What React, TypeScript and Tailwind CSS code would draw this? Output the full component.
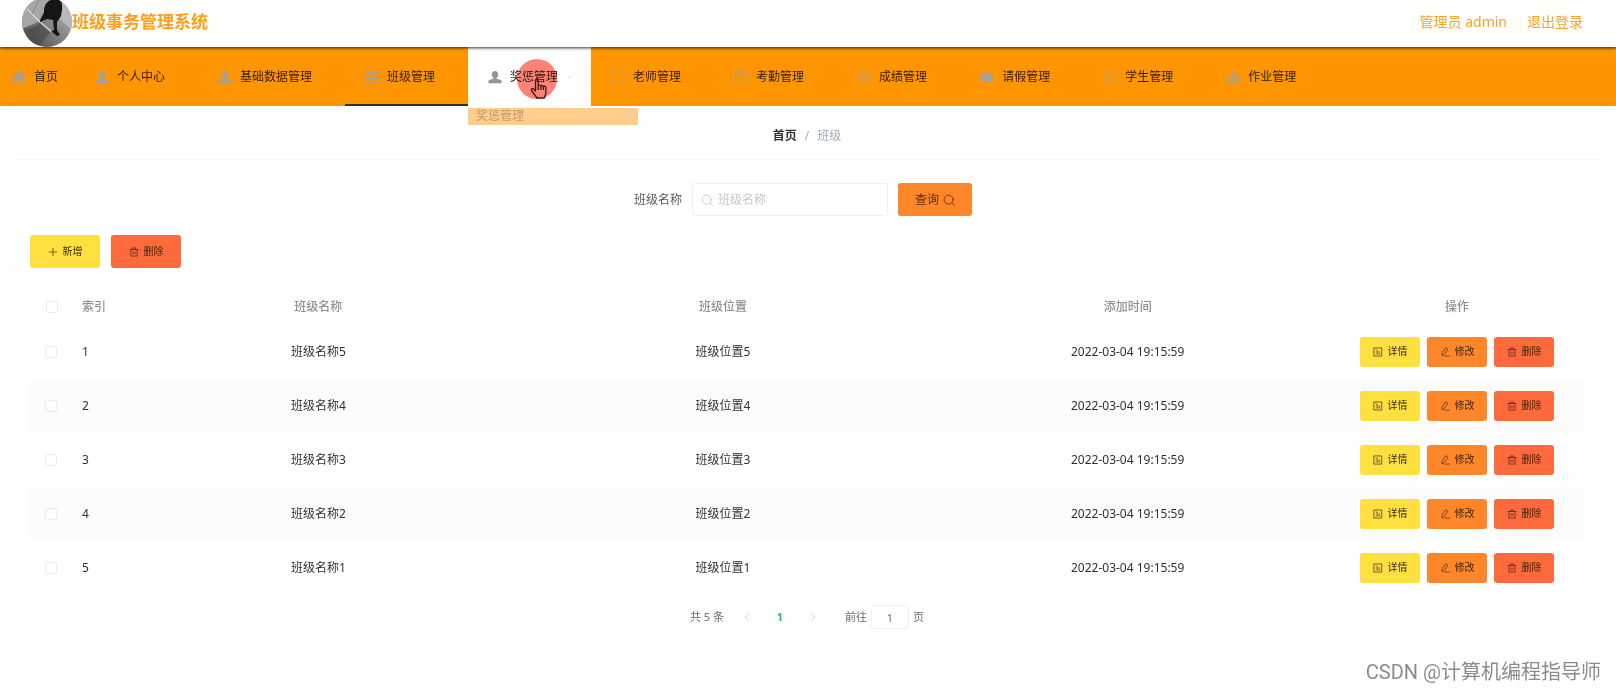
import { useState } from 'react'
import type { ReactNode } from 'react'

type Row = { id: number; name: string; place: string; time: string }
type MenuItem = { label: string; icon: ReactNode }

const rows: Row[] = [
  { id: 1, name: '班级名称5', place: '班级位置5', time: '2022-03-04 19:15:59' },
  { id: 2, name: '班级名称4', place: '班级位置4', time: '2022-03-04 19:15:59' },
  { id: 3, name: '班级名称3', place: '班级位置3', time: '2022-03-04 19:15:59' },
  { id: 4, name: '班级名称2', place: '班级位置2', time: '2022-03-04 19:15:59' },
  { id: 5, name: '班级名称1', place: '班级位置1', time: '2022-03-04 19:15:59' },
]

// 选单图标：实心与线框两种
function Solid({ children }: { children: ReactNode }) {
  return <svg viewBox="0 0 16 16" fill="currentColor" className="size-[14px]" aria-hidden="true">{children}</svg>
}

function Line({ children, className = 'size-[14px]' }: { children: ReactNode; className?: string }) {
  return (
    <svg viewBox="0 0 16 16" fill="none" stroke="currentColor" strokeWidth="1.1" strokeLinecap="round"
      strokeLinejoin="round" className={className} aria-hidden="true">{children}</svg>
  )
}

const userIcon = (
  <Solid><path d="M8 1.200c2.200 0 3.700 1.600 3.700 3.800 0 1.700-.8 3.200-2 4v1l4.600 1.500c.8.3 1.200.9 1.200 1.700V15H.5v-1.800c0-.8.4-1.400 1.200-1.700L6.300 10V9c-1.200-.8-2-2.300-2-4C4.300 2.800 5.800 1.200 8 1.200z" /></Solid>
)

const menus: MenuItem[] = [
  { label: '个人中心', icon: userIcon },
  { label: '基础数据管理', icon: userIcon },
  { label: '班级管理', icon: <Solid><path d="M1 2h14v2H1zM1 5.500h14v1.500H1zM1 9h14v1.500H1zM1 12.500h14v2H1z" /></Solid> },
  { label: '奖惩管理', icon: userIcon },
  { label: '老师管理', icon: <Line><path d="M2 5V2h3M11 2h3v3M14 11v3h-3M5 14H2v-3" /></Line> },
  { label: '考勤管理', icon: <Line><path d="M1.500 14V2.500h13V14h-3M1.500 14h3M6 7l2 2 2.500-3" /></Line> },
  { label: '成绩管理', icon: <Line><circle cx="8" cy="8" r="6.800" /><path d="M5.500 5h5v3.500a2.500 2.500 0 0 1-5 0zM8 11v1.500" /></Line> },
  { label: '请假管理', icon: <Solid><path d="M1 3h14v3.500a1.500 1.500 0 0 0 0 3V13H1V9.500a1.500 1.500 0 0 0 0-3z" /></Solid> },
  { label: '学生管理', icon: <Line><path d="M5 2.300a6.400 6.400 0 1 0 6 0M8 1.500v5" /></Line> },
  { label: '作业管理', icon: <Solid><path d="M1 8h3.500v6.500H1zM6.300 2h3.400v12.500H6.300zM11.500 6H15v8.500h-3.500z" /></Solid> },
]

const active = '班级管理'
const hovered = '奖惩管理'

const searchIcon = <Line className="size-3"><circle cx="7.500" cy="7.500" r="6" /><path d="M12 12l3 3" /></Line>
const trashIcon = <Line className="size-[10px]"><path d="M1.500 4h13M3 4v10.500h10V4M5.500 4V1.500h5V4M6.500 7.500v3.500M9.500 7.500v3.500" /></Line>
const detailIcon = <Line className="size-[10px]"><path d="M2 1.500h12v13H2zM5 5h2M5 8h6M5 11h6" /></Line>
const editIcon = <Line className="size-[10px]"><path d="M9.500 1.500l3 2-6 9-3.500 1.500.5-4zM8 14.500h7" /></Line>

function Logo() {
  return (
    <svg viewBox="0 0 50 50" className="size-[50px] rounded-full" aria-hidden="true">
      <defs>
        <linearGradient id="floor" x1="0" y1="1" x2="1" y2="0">
          <stop offset="0" stopColor="#3c3c3c" />
          <stop offset=".4" stopColor="#777" />
          <stop offset="1" stopColor="#c4c4c4" />
        </linearGradient>
      </defs>
      <rect width="50" height="50" fill="url(#floor)" />
      <path d="M0 0h28L18 24 0 32z" fill="#a6a6a6" />
      <path d="M40 3l10 6v24L38 22z" fill="#b8b8b8" />
      <path d="M5 12l13 13 12 10" stroke="#dcdcdc" strokeWidth="1.200" fill="none" />
      <path d="M17 3l-7 14" stroke="#8a8a8a" />
      <path d="M5 34l13-8 10 10-12 14H8z" fill="#4a4a4a" opacity=".7" />
      <path d="M29 3c4-2 8-1 10 1 2 4 1 10 0 15l-4 6v8l3 5-3 1-6-5 3-1-1-10-6-1-7 3c0-4 3-6 4-10 0-6 2-10 7-12z" fill="#161616" />
    </svg>
  )
}

function Pointer() {
  return (
    <span className="absolute left-[49px] top-3 z-20 block size-10 rounded-full bg-[#fc8378] mix-blend-multiply pointer-events-none">
      <svg viewBox="0 0 18 22" className="absolute left-[13px] top-[19px] w-[18px] h-[22px]" fill="#fc8378" stroke="#4a1518"
        strokeWidth="1.300" strokeLinejoin="round" aria-hidden="true">
        <path d="M5.500 13V2.500c0-2 2.700-2 2.700 0V8c.2-1.300 2.600-1.200 2.700.3.300-1.100 2.400-1 2.500.5.4-1 2.500-.8 2.500 1V15l-1.500 5H7L1.500 12.500c-.8-1.600 1-2.500 2-1.500z" />
        <path d="M8.200 8v4M10.900 8.500V12M13.400 9v3" />
      </svg>
    </span>
  )
}

function Menu({ item }: { item: MenuItem }) {
  const isActive = item.label === active
  const isHovered = item.label === hovered
  return (
    <li className={`relative border-b-2 ${isHovered ? 'bg-white border-white' : isActive ? 'border-[#303133]' : 'border-transparent'}`}>
      <a href="#" className="flex h-[57px] items-center pt-[3px] pl-[18px] pr-[15px] text-[#2d1f0c]">
        <span className={`flex w-[18px] justify-center ${isHovered ? 'text-[#8f959e]' : 'text-[#a5a194]'}`}>{item.icon}</span>
        <span className="mx-[6px] whitespace-nowrap">{item.label}</span>
        <span className={`flex w-3 justify-center ${isHovered ? 'text-[#c5c8ce]' : 'text-[#f3a040]'}`}>
          <Line className="size-2"><path d="M3 5l5 5 5-5" /></Line>
        </span>
      </a>
      {isHovered && (
        <>
          <Pointer />
          <div className="absolute left-0 top-[61px] z-10 h-[17px] w-[170px] overflow-hidden bg-[#ffcd8d] pl-2 leading-4">
            <a href="#" className="text-[#c29a68]">奖惩管理</a>
          </div>
        </>
      )}
    </li>
  )
}

function RowButton({ label, icon, color }: { label: string; icon: ReactNode; color: string }) {
  return (
    <button type="button" className={`flex h-[30px] w-[60px] items-center justify-center gap-[5px] rounded-[3px] text-[10px] text-[#3b2a17] ${color}`}>
      {icon}{label}
    </button>
  )
}

const checkbox = 'block size-3 appearance-none rounded-[2px] border border-[#ebecee] bg-white checked:bg-[#ff9500]'

export default function App() {
  const [keyword, setKeyword] = useState('')
  const [page, setPage] = useState('1')
  const [picked, setPicked] = useState<number[]>([])

  function toggle(id: number) {
    setPicked(picked.includes(id) ? picked.filter(x => x !== id) : [...picked, id])
  }

  return (
    <div className="min-h-screen bg-white font-['Noto_Sans','Noto_Sans_CJK_SC',sans-serif] text-xs text-[#303133]">
      <header className="relative z-10 flex h-[47px] items-end justify-between overflow-hidden bg-[#fffffd] pl-[22px] pr-[33px] shadow-[0_1px_3px_rgba(0,0,0,0.8)]">
        <div className="flex h-[50px] items-center">
          <Logo />
          <h1 className="text-[17px] font-bold text-[#ff9d1c]">班级事务管理系统</h1>
        </div>
        <div className="flex h-[50px] items-center gap-5 text-sm text-[#f5a32c]">
          <span>管理员 admin</span>
          <a href="#">退出登录</a>
        </div>
      </header>

      <nav className="bg-[#ff9500]">
        <ul className="flex h-[59px]">
          <li>
            <a href="#" className="flex h-[57px] items-center gap-[6px] pt-[3px] pl-[10px] pr-[17px] text-[#2d1f0c]">
              <span className="flex w-[18px] justify-center text-[#a5a194]">
                <Solid><path d="M8 1l7.500 7-1.500 1v6h-4v-4.500H6V15H2V9L.5 8z" /></Solid>
              </span>
              首页
            </a>
          </li>
          {menus.map(m => <Menu key={m.label} item={m} />)}
        </ul>
      </nav>

      <div className="bg-[#fefcfd] px-3">
        <main className="bg-white">
          <div className="flex h-[54px] items-center justify-center gap-2 border-b border-[#f3f8f8] pt-[7px] pr-[2px]">
            <a href="#" className="font-bold">首页</a>
            <span className="text-[#a9adb5]">/</span>
            <span className="text-[#a3abb9]">班级</span>
          </div>

          <div className="pl-[18px] pr-5 pb-[13px]">
            <form className="flex items-center justify-center pt-[23px] pr-2" onSubmit={e => e.preventDefault()}>
              <label htmlFor="keyword" className="pr-[10px] text-[#55585e]">班级名称</label>
              <div className="flex h-[33px] w-[196px] items-center gap-[5px] rounded-[3px] border border-[#f0f0f2] pl-2 text-[#c3c6cc]">
                {searchIcon}
                <input id="keyword" value={keyword} onChange={e => setKeyword(e.target.value)} placeholder="班级名称"
                  className="w-40 text-[#606266] outline-none placeholder:text-[#c6c8cd]" />
              </div>
              <button type="submit" className="ml-[10px] flex h-[33px] w-[74px] items-center justify-center gap-1 rounded-[3px] bg-[#ff8729] text-[#553010]">
                查询{searchIcon}
              </button>
            </form>

            <div className="flex gap-[11px] pt-[19px]">
              <button type="button" className="flex h-[33px] w-[70px] items-center justify-center gap-[5px] rounded-[3px] bg-[#ffe041] text-[10px] text-[#3b2a17]">
                <Line className="size-[10px]"><path d="M8 2v12M2 8h12" /></Line>新增
              </button>
              <button type="button" className="flex h-[33px] w-[70px] items-center justify-center gap-[5px] rounded-[3px] bg-[#fd6a3b] text-[10px] text-[#3b2a17]">
                {trashIcon}删除
              </button>
            </div>

            <table className="mt-[21px] w-full table-fixed text-center">
              <colgroup>
                <col className="w-11" />
                <col className="w-[42px]" />
                <col /><col /><col />
                <col className="w-[254px]" />
              </colgroup>
              <thead>
                <tr className="h-9 text-[#8d9095]">
                  <th className="pl-4">
                    <input type="checkbox" aria-label="全选" className={checkbox} checked={picked.length === rows.length}
                      onChange={e => setPicked(e.target.checked ? rows.map(r => r.id) : [])} />
                  </th>
                  <th className="pl-2 text-left font-medium whitespace-nowrap">索引</th>
                  <th className="font-medium">班级名称</th>
                  <th className="font-medium">班级位置</th>
                  <th className="font-medium">添加时间</th>
                  <th className="font-medium">操作</th>
                </tr>
              </thead>
              <tbody>
                {rows.map(r => (
                  <tr key={r.id} className="h-[54px] even:bg-[#fcfcfb]">
                    <td className="pl-[15px]">
                      <input type="checkbox" aria-label={`选择 ${r.name}`} className={checkbox}
                        checked={picked.includes(r.id)} onChange={() => toggle(r.id)} />
                    </td>
                    <td className="pl-2 text-left">{r.id}</td>
                    <td>{r.name}</td>
                    <td>{r.place}</td>
                    <td>{r.time}</td>
                    <td>
                      <div className="flex justify-center gap-[7px]">
                        <RowButton label="详情" icon={detailIcon} color="bg-[#ffe041]" />
                        <RowButton label="修改" icon={editIcon} color="bg-[#ff8729]" />
                        <RowButton label="删除" icon={trashIcon} color="bg-[#fd6a3b]" />
                      </div>
                    </td>
                  </tr>
                ))}
              </tbody>
            </table>

            <div className="mt-[10px] flex h-6 items-center justify-center text-[11px] text-[#6b6d72]">
              <span>共 5 条</span>
              <button type="button" aria-label="上一页" className="ml-4 flex w-[14px] justify-center text-[#b9bcc2]">
                <Line className="size-[10px]"><path d="M11 2L5 8l6 6" /></Line>
              </button>
              <button type="button" className="mx-[14px] w-6 font-bold text-[#1bb394]">1</button>
              <button type="button" aria-label="下一页" className="flex w-[14px] justify-center text-[#b9bcc2]">
                <Line className="size-[10px]"><path d="M5 2l6 6-6 6" /></Line>
              </button>
              <label htmlFor="page" className="ml-[25px]">前往</label>
              <input id="page" value={page} onChange={e => setPage(e.target.value.replace(/\D/g, ''))}
                className="mx-1 h-6 w-[38px] rounded-[3px] border border-[#f0f0f2] text-center outline-none" />
              <span>页</span>
            </div>
          </div>
        </main>
      </div>

      <footer className="pt-4 pr-[15px] text-right font-['Roboto','Noto_Sans_CJK_SC',sans-serif] text-xl text-[#8b8b8b]">CSDN @计算机编程指导师</footer>
    </div>
  )
}
